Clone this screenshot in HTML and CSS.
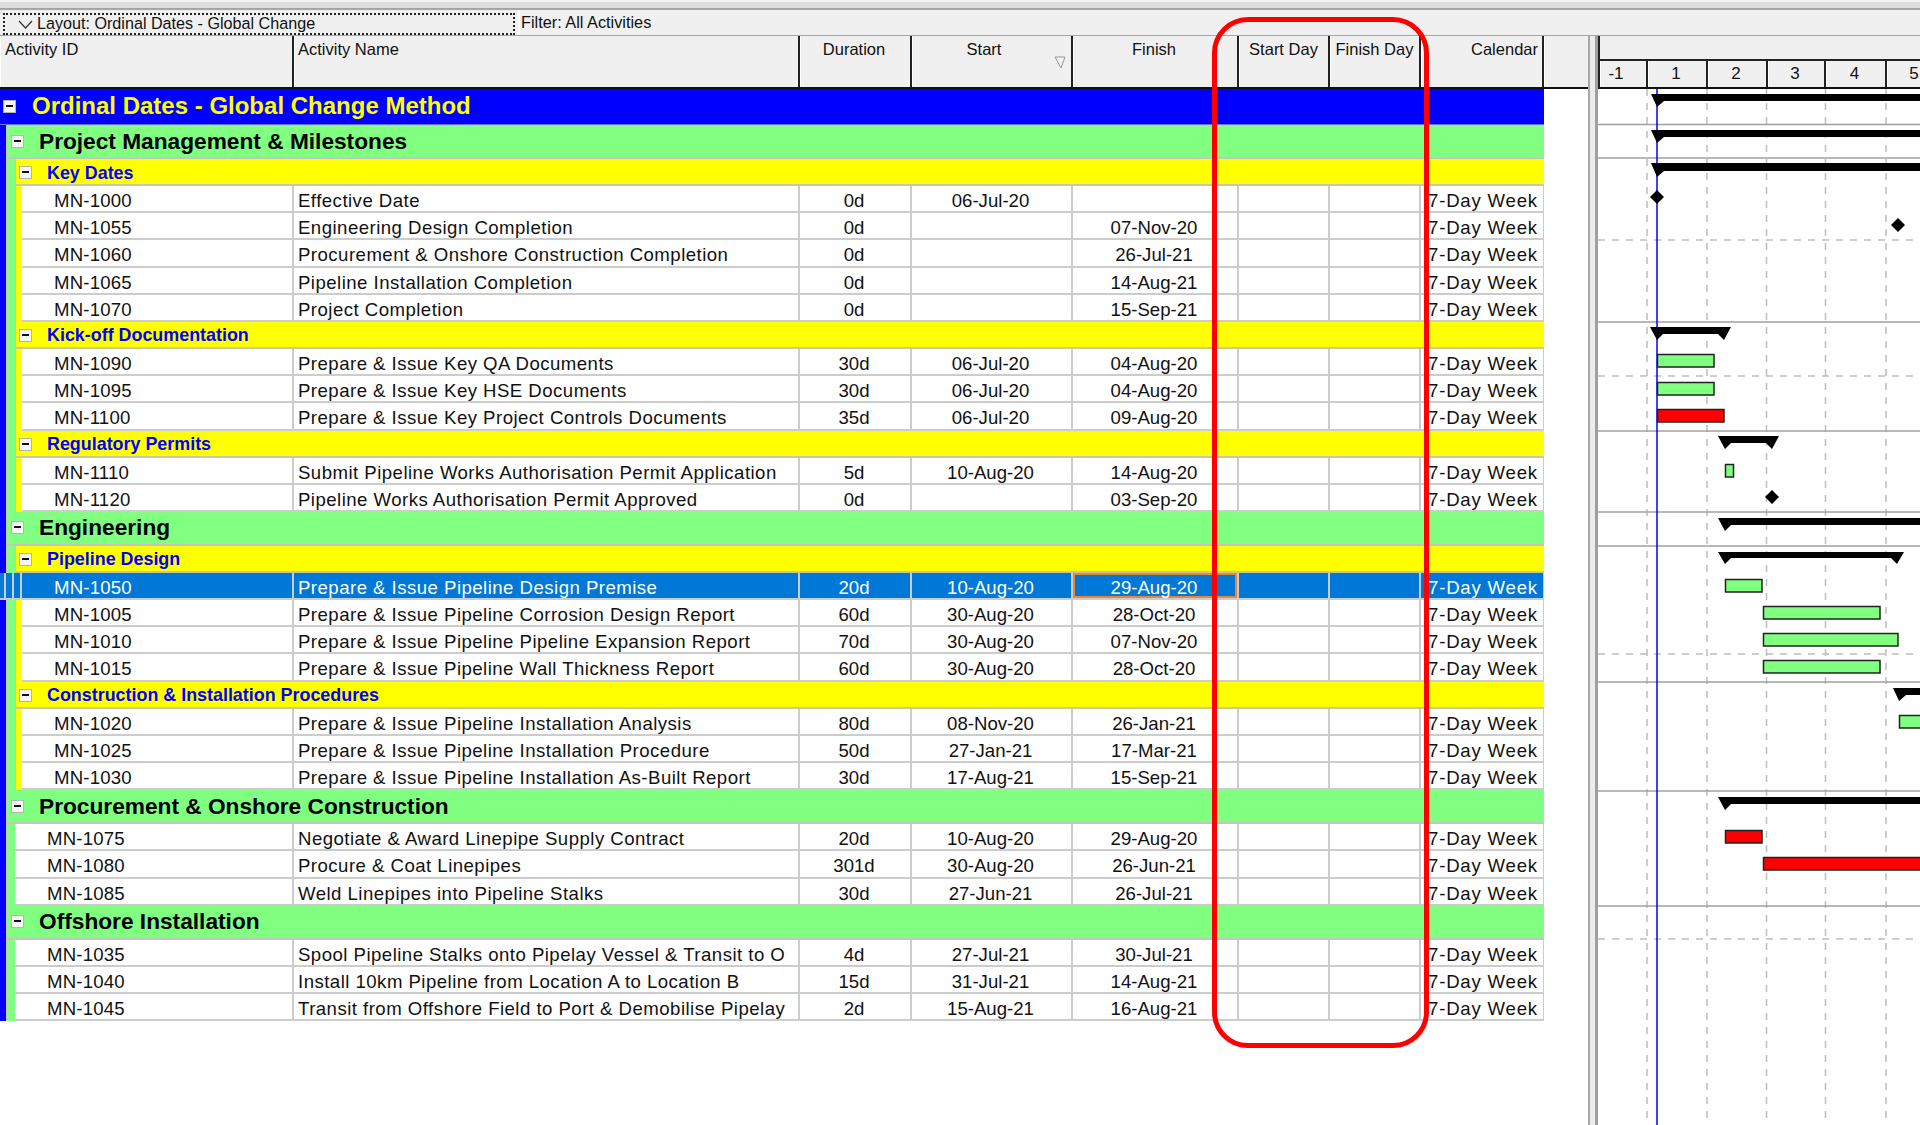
FILE: index.html
```html
<!DOCTYPE html>
<html lang="en">
<head>
  <meta charset="UTF-8">
  <title>Ordinal Dates - Global Change Method</title>
  <link rel="stylesheet" href="styles.css">
</head>
<body>

  <div class="window-edge"></div>

  <!-- Layout and filter -->
  <div class="filter-bar">
    <div class="layout-box">
      <svg class="chevron" width="15" height="9" viewBox="0 0 15 9"><path d="M1 1 L7.5 8 L14 1" fill="none" stroke="#333" stroke-width="1.2"/></svg>
      <span class="layout-name">Layout: Ordinal Dates - Global Change</span>
    </div>
    <div class="filter-box">Filter: All Activities</div>
  </div>

  <div class="workspace">

    <!-- Activity table -->
    <div class="table-pane">
      <div class="col-head">
        <div class="head-cell c-id">Activity ID</div>
        <div class="head-cell c-name">Activity Name</div>
        <div class="head-cell c-dur centre">Duration</div>
        <div class="head-cell c-start centre sorted">Start
          <svg class="sort-mark" width="12" height="13" viewBox="0 0 12 13"><path d="M1 1 H11 L7 12 Z" fill="none" stroke="#999" stroke-width="1"/></svg>
        </div>
        <div class="head-cell c-finish centre">Finish</div>
        <div class="head-cell c-sday centre">Start Day</div>
        <div class="head-cell c-fday centre">Finish Day</div>
        <div class="head-cell c-cal right">Calendar</div>
        <div class="head-cell c-rest"></div>
      </div>

      <div class="project-head"><span class="toggle"></span><span class="project-title">Ordinal Dates - Global Change Method</span></div>
      <div class="project-body">

        <div class="wbs-head"><span class="toggle"></span><span class="wbs-title">Project Management &amp; Milestones</span></div>
        <div class="wbs-body">
          <div class="sub-head"><span class="toggle"></span><span class="sub-title">Key Dates</span></div>
          <div class="sub-body">
            <div class="row"><div class="cell c-id">MN-1000</div><div class="cell c-name">Effective Date</div><div class="cell c-dur centre">0d</div><div class="cell c-start centre">06-Jul-20</div><div class="cell c-finish centre"></div><div class="cell c-sday"></div><div class="cell c-fday"></div><div class="cell c-cal">7-Day Week</div></div>
            <div class="row"><div class="cell c-id">MN-1055</div><div class="cell c-name">Engineering Design Completion</div><div class="cell c-dur centre">0d</div><div class="cell c-start centre"></div><div class="cell c-finish centre">07-Nov-20</div><div class="cell c-sday"></div><div class="cell c-fday"></div><div class="cell c-cal">7-Day Week</div></div>
            <div class="row"><div class="cell c-id">MN-1060</div><div class="cell c-name">Procurement &amp; Onshore Construction Completion</div><div class="cell c-dur centre">0d</div><div class="cell c-start centre"></div><div class="cell c-finish centre">26-Jul-21</div><div class="cell c-sday"></div><div class="cell c-fday"></div><div class="cell c-cal">7-Day Week</div></div>
            <div class="row"><div class="cell c-id">MN-1065</div><div class="cell c-name">Pipeline Installation Completion</div><div class="cell c-dur centre">0d</div><div class="cell c-start centre"></div><div class="cell c-finish centre">14-Aug-21</div><div class="cell c-sday"></div><div class="cell c-fday"></div><div class="cell c-cal">7-Day Week</div></div>
            <div class="row"><div class="cell c-id">MN-1070</div><div class="cell c-name">Project Completion</div><div class="cell c-dur centre">0d</div><div class="cell c-start centre"></div><div class="cell c-finish centre">15-Sep-21</div><div class="cell c-sday"></div><div class="cell c-fday"></div><div class="cell c-cal">7-Day Week</div></div>
          </div>

          <div class="sub-head"><span class="toggle"></span><span class="sub-title">Kick-off Documentation</span></div>
          <div class="sub-body">
            <div class="row"><div class="cell c-id">MN-1090</div><div class="cell c-name">Prepare &amp; Issue Key QA Documents</div><div class="cell c-dur centre">30d</div><div class="cell c-start centre">06-Jul-20</div><div class="cell c-finish centre">04-Aug-20</div><div class="cell c-sday"></div><div class="cell c-fday"></div><div class="cell c-cal">7-Day Week</div></div>
            <div class="row"><div class="cell c-id">MN-1095</div><div class="cell c-name">Prepare &amp; Issue Key HSE Documents</div><div class="cell c-dur centre">30d</div><div class="cell c-start centre">06-Jul-20</div><div class="cell c-finish centre">04-Aug-20</div><div class="cell c-sday"></div><div class="cell c-fday"></div><div class="cell c-cal">7-Day Week</div></div>
            <div class="row"><div class="cell c-id">MN-1100</div><div class="cell c-name">Prepare &amp; Issue Key Project Controls Documents</div><div class="cell c-dur centre">35d</div><div class="cell c-start centre">06-Jul-20</div><div class="cell c-finish centre">09-Aug-20</div><div class="cell c-sday"></div><div class="cell c-fday"></div><div class="cell c-cal">7-Day Week</div></div>
          </div>

          <div class="sub-head"><span class="toggle"></span><span class="sub-title">Regulatory Permits</span></div>
          <div class="sub-body">
            <div class="row"><div class="cell c-id">MN-1110</div><div class="cell c-name">Submit Pipeline Works Authorisation Permit Application</div><div class="cell c-dur centre">5d</div><div class="cell c-start centre">10-Aug-20</div><div class="cell c-finish centre">14-Aug-20</div><div class="cell c-sday"></div><div class="cell c-fday"></div><div class="cell c-cal">7-Day Week</div></div>
            <div class="row"><div class="cell c-id">MN-1120</div><div class="cell c-name">Pipeline Works Authorisation Permit Approved</div><div class="cell c-dur centre">0d</div><div class="cell c-start centre"></div><div class="cell c-finish centre">03-Sep-20</div><div class="cell c-sday"></div><div class="cell c-fday"></div><div class="cell c-cal">7-Day Week</div></div>
          </div>
        </div>

        <div class="wbs-head"><span class="toggle"></span><span class="wbs-title">Engineering</span></div>
        <div class="wbs-body">
          <div class="sub-head"><span class="toggle"></span><span class="sub-title">Pipeline Design</span></div>
          <div class="sub-body">
            <div class="row selected"><span class="strip s1"></span><span class="strip s2"></span><span class="strip s3"></span><div class="cell c-id">MN-1050</div><div class="cell c-name">Prepare &amp; Issue Pipeline Design Premise</div><div class="cell c-dur centre">20d</div><div class="cell c-start centre">10-Aug-20</div><div class="cell c-finish centre focus">29-Aug-20</div><div class="cell c-sday"></div><div class="cell c-fday"></div><div class="cell c-cal">7-Day Week</div></div>
            <div class="row"><div class="cell c-id">MN-1005</div><div class="cell c-name">Prepare &amp; Issue Pipeline Corrosion Design Report</div><div class="cell c-dur centre">60d</div><div class="cell c-start centre">30-Aug-20</div><div class="cell c-finish centre">28-Oct-20</div><div class="cell c-sday"></div><div class="cell c-fday"></div><div class="cell c-cal">7-Day Week</div></div>
            <div class="row"><div class="cell c-id">MN-1010</div><div class="cell c-name">Prepare &amp; Issue Pipeline Pipeline Expansion Report</div><div class="cell c-dur centre">70d</div><div class="cell c-start centre">30-Aug-20</div><div class="cell c-finish centre">07-Nov-20</div><div class="cell c-sday"></div><div class="cell c-fday"></div><div class="cell c-cal">7-Day Week</div></div>
            <div class="row"><div class="cell c-id">MN-1015</div><div class="cell c-name">Prepare &amp; Issue Pipeline Wall Thickness Report</div><div class="cell c-dur centre">60d</div><div class="cell c-start centre">30-Aug-20</div><div class="cell c-finish centre">28-Oct-20</div><div class="cell c-sday"></div><div class="cell c-fday"></div><div class="cell c-cal">7-Day Week</div></div>
          </div>

          <div class="sub-head"><span class="toggle"></span><span class="sub-title">Construction &amp; Installation Procedures</span></div>
          <div class="sub-body">
            <div class="row"><div class="cell c-id">MN-1020</div><div class="cell c-name">Prepare &amp; Issue Pipeline Installation Analysis</div><div class="cell c-dur centre">80d</div><div class="cell c-start centre">08-Nov-20</div><div class="cell c-finish centre">26-Jan-21</div><div class="cell c-sday"></div><div class="cell c-fday"></div><div class="cell c-cal">7-Day Week</div></div>
            <div class="row"><div class="cell c-id">MN-1025</div><div class="cell c-name">Prepare &amp; Issue Pipeline Installation Procedure</div><div class="cell c-dur centre">50d</div><div class="cell c-start centre">27-Jan-21</div><div class="cell c-finish centre">17-Mar-21</div><div class="cell c-sday"></div><div class="cell c-fday"></div><div class="cell c-cal">7-Day Week</div></div>
            <div class="row"><div class="cell c-id">MN-1030</div><div class="cell c-name">Prepare &amp; Issue Pipeline Installation As-Built Report</div><div class="cell c-dur centre">30d</div><div class="cell c-start centre">17-Aug-21</div><div class="cell c-finish centre">15-Sep-21</div><div class="cell c-sday"></div><div class="cell c-fday"></div><div class="cell c-cal">7-Day Week</div></div>
          </div>
        </div>

        <div class="wbs-head"><span class="toggle"></span><span class="wbs-title">Procurement &amp; Onshore Construction</span></div>
        <div class="wbs-body">
          <div class="row"><div class="cell c-id">MN-1075</div><div class="cell c-name">Negotiate &amp; Award Linepipe Supply Contract</div><div class="cell c-dur centre">20d</div><div class="cell c-start centre">10-Aug-20</div><div class="cell c-finish centre">29-Aug-20</div><div class="cell c-sday"></div><div class="cell c-fday"></div><div class="cell c-cal">7-Day Week</div></div>
          <div class="row"><div class="cell c-id">MN-1080</div><div class="cell c-name">Procure &amp; Coat Linepipes</div><div class="cell c-dur centre">301d</div><div class="cell c-start centre">30-Aug-20</div><div class="cell c-finish centre">26-Jun-21</div><div class="cell c-sday"></div><div class="cell c-fday"></div><div class="cell c-cal">7-Day Week</div></div>
          <div class="row"><div class="cell c-id">MN-1085</div><div class="cell c-name">Weld Linepipes into Pipeline Stalks</div><div class="cell c-dur centre">30d</div><div class="cell c-start centre">27-Jun-21</div><div class="cell c-finish centre">26-Jul-21</div><div class="cell c-sday"></div><div class="cell c-fday"></div><div class="cell c-cal">7-Day Week</div></div>
        </div>

        <div class="wbs-head"><span class="toggle"></span><span class="wbs-title">Offshore Installation</span></div>
        <div class="wbs-body">
          <div class="row"><div class="cell c-id">MN-1035</div><div class="cell c-name">Spool Pipeline Stalks onto Pipelay Vessel &amp; Transit to O</div><div class="cell c-dur centre">4d</div><div class="cell c-start centre">27-Jul-21</div><div class="cell c-finish centre">30-Jul-21</div><div class="cell c-sday"></div><div class="cell c-fday"></div><div class="cell c-cal">7-Day Week</div></div>
          <div class="row"><div class="cell c-id">MN-1040</div><div class="cell c-name">Install 10km Pipeline from Location A to Location B</div><div class="cell c-dur centre">15d</div><div class="cell c-start centre">31-Jul-21</div><div class="cell c-finish centre">14-Aug-21</div><div class="cell c-sday"></div><div class="cell c-fday"></div><div class="cell c-cal">7-Day Week</div></div>
          <div class="row"><div class="cell c-id">MN-1045</div><div class="cell c-name">Transit from Offshore Field to Port &amp; Demobilise Pipelay</div><div class="cell c-dur centre">2d</div><div class="cell c-start centre">15-Aug-21</div><div class="cell c-finish centre">16-Aug-21</div><div class="cell c-sday"></div><div class="cell c-fday"></div><div class="cell c-cal">7-Day Week</div></div>
        </div>

      </div>
    </div>

    <div class="splitter"></div>

    <!-- Gantt chart -->
    <div class="gantt-pane">
      <div class="time-top"></div>
      <div class="time-scale">
        <div class="tick t-minus">-1</div>
        <div class="tick t-1">1</div>
        <div class="tick t-2">2</div>
        <div class="tick t-3">3</div>
        <div class="tick t-4">4</div>
        <div class="tick t-5">5</div>
      </div>
      <svg class="gantt-chart" viewBox="1598 89 322 1036" width="322" height="1036">
        <!-- month grid -->
        <g class="grid-v">
          <line x1="1647" y1="89" x2="1647" y2="1125"/>
          <line x1="1707" y1="89" x2="1707" y2="1125"/>
          <line x1="1766.5" y1="89" x2="1766.5" y2="1125"/>
          <line x1="1825.5" y1="89" x2="1825.5" y2="1125"/>
          <line x1="1886" y1="89" x2="1886" y2="1125"/>
        </g>
        <g class="grid-h">
          <line x1="1598" y1="240" x2="1920" y2="240"/>
          <line x1="1598" y1="376" x2="1920" y2="376"/>
          <line x1="1598" y1="654" x2="1920" y2="654"/>
          <line x1="1598" y1="939" x2="1920" y2="939"/>
        </g>
        <!-- band dividers -->
        <g class="band-line">
          <line x1="1598" y1="124.5" x2="1920" y2="124.5"/>
          <line x1="1598" y1="158" x2="1920" y2="158"/>
          <line x1="1598" y1="322" x2="1920" y2="322"/>
          <line x1="1598" y1="431" x2="1920" y2="431"/>
          <line x1="1598" y1="512" x2="1920" y2="512"/>
          <line x1="1598" y1="546" x2="1920" y2="546"/>
          <line x1="1598" y1="682" x2="1920" y2="682"/>
          <line x1="1598" y1="791" x2="1920" y2="791"/>
          <line x1="1598" y1="906" x2="1920" y2="906"/>
        </g>
        <line class="data-date" x1="1657" y1="89" x2="1657" y2="1125"/>

        <!-- summary bars -->
        <path class="summary" d="M1651 94 H1920 V101 H1664 L1657 107 Z"/>
        <path class="summary" d="M1651 130 H1920 V137 H1664 L1657 143 Z"/>
        <path class="summary" d="M1651 163 H1920 V171 H1664 L1657 177 Z"/>
        <path class="summary" d="M1650 327 H1731 L1724 340 L1718 334 H1663 L1657 340 Z"/>
        <path class="summary" d="M1718 436 H1779 L1772 449 L1766 443 H1731 L1725 449 Z"/>
        <path class="summary" d="M1718 518 H1920 V525 H1731 L1725 531 Z"/>
        <path class="summary" d="M1718 552 H1904 L1897 564 L1891 558 H1731 L1725 564 Z"/>
        <path class="summary" d="M1893 688 H1920 V695 H1906 L1899 701 Z"/>
        <path class="summary" d="M1718 797 H1920 V804 H1731 L1725 810 Z"/>

        <!-- milestones -->
        <polygon class="summary" points="1657,190 1664,197 1657,204 1650,197"/>
        <polygon class="summary" points="1898,218 1905,225 1898,232 1891,225"/>
        <polygon class="summary" points="1772,490 1779,497 1772,504 1765,497"/>

        <!-- activity bars -->
        <rect class="bar" x="1657.5" y="354.5" width="56.5" height="12.5"/>
        <rect class="bar" x="1657.5" y="382.5" width="56.5" height="12.5"/>
        <rect class="bar critical" x="1657.5" y="409.5" width="66.5" height="12.5"/>
        <rect class="bar" x="1725.5" y="464.5" width="8" height="12.5"/>
        <rect class="bar" x="1725.5" y="579.5" width="36.5" height="12.5"/>
        <rect class="bar" x="1763.5" y="606.5" width="116.5" height="12.5"/>
        <rect class="bar" x="1763.5" y="633.5" width="134.5" height="12.5"/>
        <rect class="bar" x="1763.5" y="660.5" width="116.5" height="12.5"/>
        <rect class="bar" x="1899.5" y="715.5" width="40" height="12.5"/>
        <rect class="bar critical" x="1725.5" y="830.5" width="36.5" height="12.5"/>
        <rect class="bar critical" x="1763.5" y="857.5" width="180" height="12.5"/>
      </svg>
    </div>
  </div>

  <!-- Callout drawn on the screenshot -->
  <div class="callout"></div>

</body>
</html>
```

FILE: styles.css
```css
/* General */
* {
  box-sizing: border-box;
}

body {
  margin: 0;
  width: 1920px;
  height: 1125px;
  overflow: hidden;
  background: white;
  color: #111;
  font-family: "Liberation Sans", Arial, sans-serif;
  position: relative;
}

.window-edge {
  height: 10px;
  background: #dedede;
  border-top: 2px solid #f4f4f4;
  border-bottom: 2px solid #a6a6a6;
}

/* Layout / filter bar */
.filter-bar {
  height: 26px;
  background: #f0f0f0;
  display: flex;
  border-bottom: 1px solid #a6a6a6;
}

.layout-box {
  width: 512px;
  height: 22px;
  margin: 3px 0 0 3px;
  border: 2px dotted #222;
  display: flex;
  align-items: center;
  font-size: 16.15px;
  background: #f0f0f0;
}

.layout-name {
  padding-bottom: 2px;
}

.chevron {
  margin: 0 4px 0 13px;
}

.filter-box {
  margin-left: 3px;
  padding-left: 1px;
  padding-top: 1px;
  border-left: 2px solid white;
  font-size: 16.3px;
  line-height: 23px;
}

/* Main split */
.workspace {
  display: flex;
  height: 1089px;
}

.table-pane {
  width: 1588px;
  flex-shrink: 0;
}

.splitter {
  width: 10px;
  background: #ececec;
  border-left: 2px solid #a8a8a8;
  border-right: 3px solid #a0a0a0;
}

.gantt-pane {
  flex: 1;
  overflow: hidden;
}

/* Column widths */
.c-id { flex: 1; min-width: 0; }
.c-name { width: 506px; }
.c-dur { width: 112px; }
.c-start { width: 161px; }
.c-finish { width: 166px; }
.c-sday { width: 91px; }
.c-fday { width: 91px; }
.c-cal { width: 123px; }
.c-rest { width: 44px; }

.centre { text-align: center; }
.right { text-align: right; }

/* Column headers */
.col-head {
  display: flex;
  height: 53px;
  background: #f0f0f0;
  border-bottom: 2px solid #111;
}

.head-cell {
  font-size: 16.5px;
  line-height: 20px;
  padding: 3px 4px 0 4px;
  border-right: 2px solid #222;
  box-shadow: inset 1px 0 0 white;
  position: relative;
}

.col-head .c-id { flex: none; width: 294px; padding-left: 5px; }
.col-head .c-dur, .col-head .c-finish { padding-right: 6px; }
.col-head .c-rest { border-right: none; }
.col-head .right { padding-right: 4px; }
.col-head .sorted { padding-right: 19px; }

.sort-mark {
  position: absolute;
  right: 5px;
  top: 20px;
}

/* Grouping bands */
.project-head, .wbs-head, .sub-head {
  display: flex;
  align-items: center;
  width: 100%;
}

.project-head {
  width: 1544px;
  height: 36px;
  padding-left: 3px;
  background: #0000ff;
  border-bottom: 1px solid #6f6fff;
}

.project-title {
  margin-left: 16px;
  padding-bottom: 2px;
  font-size: 24px;
  font-weight: bold;
  color: #ffff00;
}

.project-body {
  width: 1544px;
  padding-left: 6px;
  background: #0000ff;
}

.wbs-head {
  height: 34px;
  padding-left: 4px;
  background: #80ff80;
  border-left: 1px solid #c8c8c8;
  border-bottom: 2px solid #c4c4c4;
}

.wbs-title {
  margin-left: 15px;
  font-size: 22.7px;
  font-weight: bold;
  color: black;
}

.wbs-body {
  padding-left: 8px;
  background: #80ff80;
  border-left: 1px solid #c8c8c8;
}

.sub-head {
  height: 27px;
  padding-left: 3px;
  padding-top: 2px;
  background: #ffff00;
  border-left: 1px solid #c8c8c8;
  border-bottom: 2px solid #c9c9a0;
}

.sub-title {
  margin-left: 15px;
  padding-top: 1px;
  font-size: 17.9px;
  font-weight: bold;
  color: #0000ff;
}

.sub-body {
  padding-left: 6px;
  background: #ffff00;
  border-left: 1px solid #c8c8c8;
}

/* Collapse box */
.toggle {
  width: 13px;
  height: 13px;
  flex-shrink: 0;
  background: #f6f6f6;
  border: 1px solid #b5b5b5;
  position: relative;
}

.toggle::before {
  content: "";
  position: absolute;
  left: 2px;
  right: 2px;
  top: 4px;
  height: 2px;
  background: #111;
}

/* Activity rows */
.row {
  display: flex;
  height: 27.2px;
  background: white;
  font-size: 18.6px;
  line-height: 30.5px;
  white-space: nowrap;
}

.cell {
  height: 100%;
  overflow: hidden;
  border-right: 2px solid #cccccc;
  border-bottom: 2px solid #cccccc;
}

.cell.centre { padding-right: 2px; }
.cell.c-id { padding-left: 32px; letter-spacing: 0.2px; }
.cell.c-name { padding-left: 4px; letter-spacing: 0.47px; }
.cell.c-cal { padding-left: 7px; letter-spacing: 0.8px; border-right: 1px solid #cccccc; }

/* Selected row */
.row.selected {
  margin-left: -22px;
  background: #0078d7;
  color: white;
}

.strip {
  height: 100%;
  flex-shrink: 0;
  background: #0078d7;
  border-right: 2px solid #c0d0e0;
  border-bottom: 2px solid #cccccc;
}

.s1 { width: 6px; background: #0a7ad8; }
.s2 { width: 8px; }
.s3 { width: 8px; }

.focus {
  box-shadow: inset 0 0 0 2px #e8873a;
}

/* Gantt header */
.time-top {
  height: 25px;
  background: #f0f0f0;
  border-left: 2px solid #222;
  border-bottom: 2px solid #222;
}

.time-scale {
  display: flex;
  height: 28px;
  background: #f0f0f0;
  border-left: 2px solid #222;
  border-bottom: 2px solid #111;
}

.tick {
  font-size: 17px;
  line-height: 26px;
  text-align: center;
  flex-shrink: 0;
  padding-right: 2px;
  border-right: 2px solid #222;
  box-shadow: inset 1px 0 0 white;
}

.t-minus { width: 48px; padding-right: 14px; }
.t-1 { width: 60px; }
.t-2 { width: 60px; }
.t-3 { width: 58px; }
.t-4 { width: 61px; }
.t-5 { width: 34px; padding-right: 0; padding-left: 20px; border-right: none; }

/* Gantt drawing */
.gantt-chart {
  display: block;
}

.grid-v line, .grid-h line {
  stroke: #bdbdbd;
  stroke-width: 1.5;
  stroke-dasharray: 7 7;
}

.band-line line {
  stroke: #a0a0a0;
  stroke-width: 1.5;
}

.data-date {
  stroke: #0000ff;
  stroke-width: 1.5;
}

.summary {
  fill: black;
}

.bar {
  fill: #80ff80;
  stroke: #222;
  stroke-width: 1.5;
}

.bar.critical {
  fill: #ff0000;
}

/* Red callout round the two day columns */
.callout {
  position: absolute;
  left: 1212px;
  top: 17px;
  width: 217px;
  height: 1031px;
  border: 5px solid #ff0000;
  border-radius: 36px;
  pointer-events: none;
}
```
